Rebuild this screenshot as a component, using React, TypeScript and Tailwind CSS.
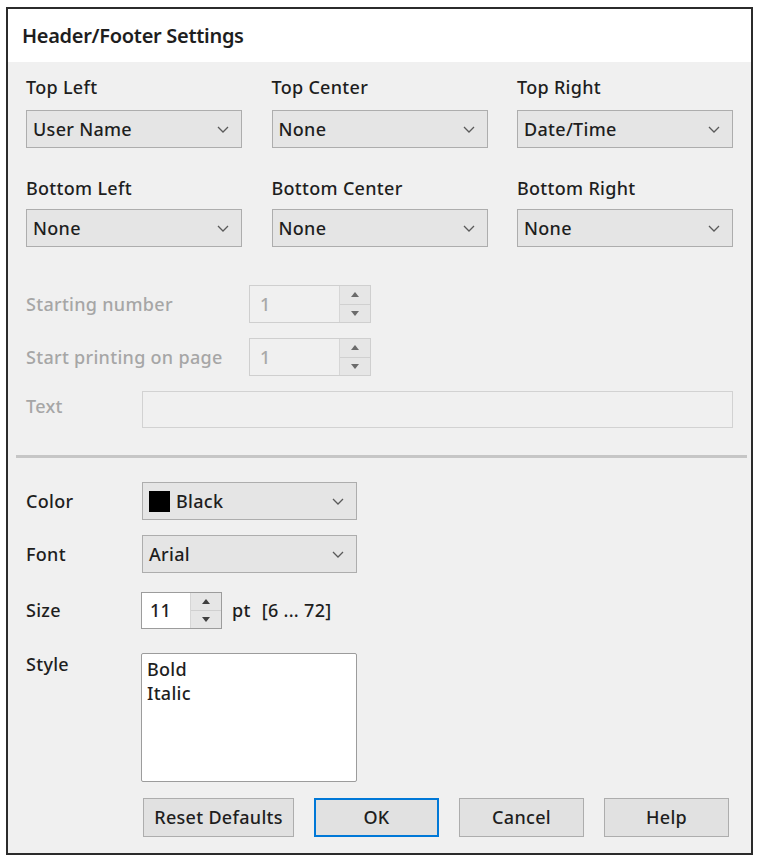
import React from "react";

const font = "font-['Noto_Sans','Open_Sans',sans-serif]";

function Chevron() {
  return (
    <svg width="12" height="7" viewBox="0 0 12 7" className="shrink-0">
      <path d="M1 1l5 5 5-5" fill="none" stroke="#5a5a5a" strokeWidth="1.3" />
    </svg>
  );
}

function Combo({ value, swatch }: { value: string; swatch?: boolean }) {
  return (
    <div className="flex h-[38px] w-full items-center border border-[#adadad] bg-[#e5e5e5] pl-[6px] pr-[12px] text-[#1e1e1e]">
      {swatch && <span className="mr-[6px] h-[21px] w-[21px] bg-black" />}
      <span className="flex-1 leading-none">{value}</span>
      <Chevron />
    </div>
  );
}

function SpinArrows({ dim }: { dim?: boolean }) {
  const c = dim ? "#6b6b6b" : "#404040";
  return (
    <div className="flex h-full w-[31px] flex-col border-l border-[#d6d6d6] bg-[#e6e6e6]">
      <div className="flex flex-1 items-center justify-center border-b border-[#d0d0d0]">
        <svg width="8" height="5" viewBox="0 0 8 5">
          <path d="M0 5L4 0L8 5Z" fill={c} />
        </svg>
      </div>
      <div className="flex flex-1 items-center justify-center">
        <svg width="8" height="5" viewBox="0 0 8 5">
          <path d="M0 0L8 0L4 5Z" fill={c} />
        </svg>
      </div>
    </div>
  );
}

function DisabledSpinner() {
  return (
    <div className="flex h-[38px] w-[122px] items-stretch border border-[#cfcfcf] bg-[#f0f0f0]">
      <span className="flex flex-1 items-center pl-[10px] text-[#a8a8a8]">1</span>
      <SpinArrows dim />
    </div>
  );
}

function Btn({ label, w, primary }: { label: string; w: string; primary?: boolean }) {
  return (
    <div
      className={`flex h-[39px] items-center justify-center bg-[#e1e1e1] text-[#1e1e1e] ${w} ${
        primary ? "border-2 border-[#0078d7]" : "border border-[#adadad]"
      }`}
    >
      {label}
    </div>
  );
}

export default function App() {
  const topRow = [
    { label: "Top Left", value: "User Name" },
    { label: "Top Center", value: "None" },
    { label: "Top Right", value: "Date/Time" },
  ];
  const bottomRow = [
    { label: "Bottom Left", value: "None" },
    { label: "Bottom Center", value: "None" },
    { label: "Bottom Right", value: "None" },
  ];

  return (
    <div className={`min-h-screen bg-white pl-[6px] pt-[7px] ${font}`}>
      <div className="flex h-[848px] w-[747px] flex-col border-2 border-[#2b2b2b] bg-[#f0f0f0]">
        {/* title band */}
        <div className="flex h-[53px] items-center bg-white pl-[14px] text-[20px] font-semibold tracking-[-0.3px] text-[#1e1e1e]">
          Header/Footer Settings
        </div>

        <div className="flex flex-1 flex-col px-[18px] text-[18px] font-medium leading-[23px] tracking-[0.3px] text-[#1e1e1e]">
          {/* header / footer positions */}
          <div className="mt-[14px] flex justify-between">
            {topRow.map((c) => (
              <div key={c.label} className="w-[216px]">
                <div>{c.label}</div>
                <div className="mt-[11px]">
                  <Combo value={c.value} />
                </div>
              </div>
            ))}
          </div>
          <div className="mt-[29px] flex justify-between">
            {bottomRow.map((c) => (
              <div key={c.label} className="w-[216px]">
                <div>{c.label}</div>
                <div className="mt-[9px]">
                  <Combo value={c.value} />
                </div>
              </div>
            ))}
          </div>

          {/* disabled numbering */}
          <div className="mt-[38px] flex items-center text-[#a6a6a6]">
            <span className="w-[223px]">Starting number</span>
            <DisabledSpinner />
          </div>
          <div className="mt-[15px] flex items-center text-[#a6a6a6]">
            <span className="w-[223px]">Start printing on page</span>
            <DisabledSpinner />
          </div>
          <div className="mt-[15px] flex items-center text-[#a6a6a6]">
            <span className="-mt-[6px] w-[116px]">Text</span>
            <div className="h-[37px] flex-1 border border-[#d2d2d2] bg-[#f0f0f0]" />
          </div>
        </div>

        {/* separator */}
        <div className="mt-[27px] ml-[8px] mr-[4px] h-[3px] bg-[#c6c6c6]" />

        <div className="flex flex-col px-[18px] pb-[16px] text-[18px] font-medium leading-[23px] tracking-[0.3px] text-[#1e1e1e]">
          <div className="mt-[24px] flex items-center">
            <span className="w-[116px]">Color</span>
            <div className="w-[215px]">
              <Combo value="Black" swatch />
            </div>
          </div>
          <div className="mt-[15px] flex items-center">
            <span className="w-[116px]">Font</span>
            <div className="w-[215px]">
              <Combo value="Arial" />
            </div>
          </div>
          <div className="mt-[19px] flex items-center">
            <span className="w-[115px]">Size</span>
            <div className="flex h-[37px] w-[81px] items-stretch border border-[#9c9c9c] bg-white">
              <span className="flex flex-1 items-center pl-[8px]">11</span>
              <SpinArrows />
            </div>
            <span className="ml-[10px]">pt</span>
            <span className="ml-[11px]">[6 ... 72]</span>
          </div>
          <div className="mt-[24px] flex items-start">
            <span className="w-[115px]">Style</span>
            <div className="h-[129px] w-[216px] rounded-[2px] border border-[#9c9c9c] bg-white px-[5px] pt-[3px] leading-[24px]">
              <div>Bold</div>
              <div>Italic</div>
            </div>
          </div>
          <div className="mt-[16px] ml-[117px] flex gap-[20px]">
            <Btn label="Reset Defaults" w="w-[151px]" />
            <Btn label="OK" w="w-[125px]" primary />
            <Btn label="Cancel" w="w-[125px]" />
            <Btn label="Help" w="w-[125px]" />
          </div>
        </div>
      </div>
    </div>
  );
}
